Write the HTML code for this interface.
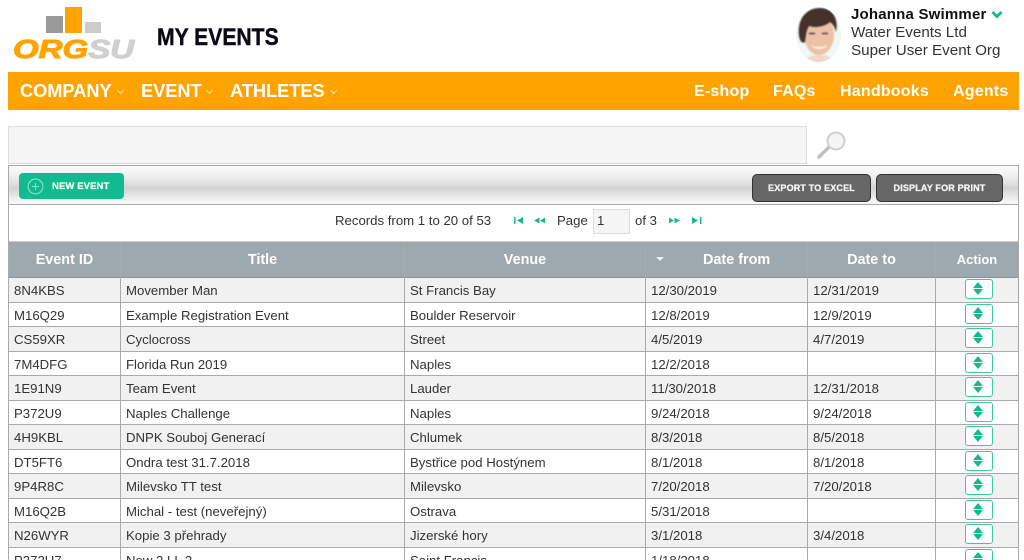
<!DOCTYPE html>
<html><head><meta charset="utf-8"><title>My Events</title>
<style>
html,body{margin:0;padding:0;width:1024px;height:560px;overflow:hidden;background:#fff;font-family:"Liberation Sans",sans-serif;color:#333;font-size:13.2px}
div,span,svg{position:absolute;box-sizing:border-box;white-space:nowrap}
#w{left:0;top:0;width:1024px;height:560px;overflow:hidden;background:#fff}
.nav{font-weight:bold;color:#fff;top:72px;height:38px;line-height:38px}
.big{font-size:18.2px;top:72px}
.small{font-size:16px;letter-spacing:.2px;top:72.5px}
.chev{width:5px;height:5px;border-right:1px solid #ffe3b0;border-bottom:1px solid #ffe3b0;transform:rotate(45deg);top:88px}
.r{left:9px;width:1009px;height:24.5px;border-bottom:1px solid #aaa;background:#fff;line-height:25px}
.o{background:#f1f1f1}
.r span{top:0}
.a{left:5px}.b{left:117px}.c{left:401px}.d{left:642px}.e{left:804px}
.btn{left:956px;top:1px!important;width:28px;height:20px;border:1.5px solid #3cc9a3;border-radius:3px;background:#fff}
.btn:before{content:"";position:absolute;left:7px;top:2px;border-left:5.5px solid transparent;border-right:5.5px solid transparent;border-bottom:6px solid #14b98d}
.btn:after{content:"";position:absolute;left:7px;top:9px;border-left:5.5px solid transparent;border-right:5.5px solid transparent;border-top:6px solid #14b98d}
.th{top:243px;height:36px;line-height:34px;color:#fff;font-weight:bold;text-align:center;font-size:14.4px}
.v{top:242px;width:1px;height:318px;background:#aaa}
.dk{top:174px;height:28px;background:#666;border:1px solid #333;border-radius:5px;color:#f2f2f2;font-weight:bold;font-size:9px;letter-spacing:.17px;line-height:26px;text-align:center;-webkit-text-stroke:.3px #f2f2f2}
.pg{top:212px;line-height:17px}
</style></head><body><div id="w">

<!-- logo -->
<div style="left:46px;top:16px;width:17px;height:17px;background:#999"></div>
<div style="left:65px;top:7px;width:17px;height:26px;background:#ffa300"></div>
<div style="left:85px;top:22px;width:16px;height:11px;background:#ccc"></div>
<div style="left:13px;top:33px;font-size:26px;line-height:32px;font-weight:bold;font-style:italic;transform-origin:0 0;transform:scaleX(1.27);-webkit-text-stroke:1px currentColor"><span style="position:static;color:#ffa300">ORG</span><span style="position:static;color:#d0d0d0">SU</span></div>

<div style="left:157px;top:23px;font-size:24px;line-height:29px;font-weight:bold;color:#0a0a14;transform-origin:0 0;transform:scaleX(.88);-webkit-text-stroke:.4px #0a0a14">MY EVENTS</div>

<!-- avatar -->
<svg style="left:795px;top:6px" width="47" height="57" viewBox="0 0 47 57">
<defs><clipPath id="cp"><ellipse cx="23.5" cy="28.5" rx="22.5" ry="27.5"/></clipPath></defs>
<g clip-path="url(#cp)"><g style="filter:blur(.7px)">
<rect width="47" height="57" fill="#eef8f5"/>
<path d="M8 57 C12 50 18 49 24 49 C31 49 36 50 40 57Z" fill="#f0d8c8"/>
<ellipse cx="24" cy="29" rx="15" ry="20" fill="#eec1a6"/>
<path d="M4 30 C2 12 12 2 25 2 C37 2 44 12 41 26 C40 22 38 18 35 16 C29 21 20 22 14 20 C11 25 11 29 10 36 C7 38 5 35 4 30Z" fill="#46302c"/>
<path d="M16 39 C21 42 28 42 32 39 C30 44 19 44 16 39Z" fill="#fff"/>
<path d="M14 27.5h6M27 27.5h6" stroke="#5a3c34" stroke-width="1.6"/>
</g></g></svg>

<div style="left:851px;top:6px;font-size:15px;font-weight:bold;line-height:18px;color:#111;letter-spacing:.2px">Johanna Swimmer</div>
<svg style="left:991px;top:10px" width="12" height="9" viewBox="0 0 12 9"><path d="M1.5 2 L6 6.5 L10.5 2" fill="none" stroke="#19b98e" stroke-width="3"/></svg>
<div style="left:851px;top:24px;font-size:15.2px;line-height:18px;color:#333">Water Events Ltd</div>
<div style="left:851px;top:42px;font-size:15.2px;line-height:18px;color:#333">Super User Event Org</div>

<!-- nav -->
<div style="left:8px;top:72px;width:1011px;height:38px;background:#ffa300"></div>
<div class="nav big" style="left:20px">COMPANY</div><div class="chev" style="left:118px"></div>
<div class="nav big" style="left:141px">EVENT</div><div class="chev" style="left:207px"></div>
<div class="nav big" style="left:230px">ATHLETES</div><div class="chev" style="left:331px"></div>
<div class="nav small" style="left:694px">E-shop</div>
<div class="nav small" style="left:773px">FAQs</div>
<div class="nav small" style="left:840px">Handbooks</div>
<div class="nav small" style="left:953px">Agents</div>

<!-- search -->
<div style="left:8px;top:126px;width:799px;height:38px;background:#f5f5f5;border:1px solid #ddd"></div>
<svg style="left:816px;top:129px" width="32" height="32" viewBox="0 0 32 32">
<path d="M3 28 L14 17" stroke="#c0c0c0" stroke-width="3.4" stroke-linecap="round"/>
<circle cx="20" cy="12" r="8.5" fill="#f4f4f4" stroke="#cfcfcf" stroke-width="2"/>
</svg>

<!-- toolbar -->
<div style="left:8px;top:165px;width:1011px;height:40px;border:1px solid #aaa;background:linear-gradient(#fbfbfb 0,#f0f0f0 25%,#dcdcdc 50%,#d2d2d2 58%,#eeeeee 85%,#f8f8f8 100%)"></div>
<div style="left:19px;top:173px;width:105px;height:26px;background:#0fbb8f;border-radius:4px"></div>
<svg style="left:27px;top:178px" width="17" height="17" viewBox="0 0 17 17"><circle cx="8.5" cy="8.5" r="7.4" fill="none" stroke="#8fe3cc" stroke-width="1.1"/><path d="M8.5 5v7M5 8.5h7" stroke="#8fe3cc" stroke-width="1"/></svg>
<div style="left:52px;top:175px;line-height:24px;font-size:9.5px;font-weight:bold;letter-spacing:.1px;color:#fff;-webkit-text-stroke:.2px #fff">NEW EVENT</div>
<div class="dk" style="left:752px;width:119px">EXPORT TO EXCEL</div>
<div class="dk" style="left:876px;width:127px">DISPLAY FOR PRINT</div>

<!-- pager -->
<div style="left:8px;top:205px;width:1px;height:355px;background:#aaa"></div>
<div style="left:1018px;top:205px;width:1px;height:355px;background:#aaa"></div>
<div class="pg" style="left:335px">Records from 1 to 20 of 53</div>
<svg style="left:513px;top:216px" width="12" height="9" viewBox="0 0 12 9"><path d="M1 1h1.5v7H1zM10 1v7L4 4.5z" fill="#19b98e"/></svg>
<svg style="left:533px;top:216px" width="13" height="9" viewBox="0 0 13 9"><path d="M6.5 1.5v6L1 4.5zM12 1.5v6L7 4.5z" fill="#19b98e"/></svg>
<div class="pg" style="left:557px">Page</div>
<div style="left:593px;top:209px;width:37px;height:25px;background:#f5f5f5;border:1px solid #ddd;line-height:21px;padding-left:3px">1</div>
<div class="pg" style="left:635px">of 3</div>
<svg style="left:668px;top:216px" width="13" height="9" viewBox="0 0 13 9"><path d="M1 1.5v6L6 4.5zM6.5 1.5v6L12 4.5z" fill="#19b98e"/></svg>
<svg style="left:691px;top:216px" width="12" height="9" viewBox="0 0 12 9"><path d="M1 1v7L7 4.5zM9 1h1.5v7H9z" fill="#19b98e"/></svg>

<!-- header -->
<div style="left:9px;top:241px;width:1009px;height:37px;background:#9da9ae;border-top:1px solid #c8cdcf;border-bottom:1px solid #8a9599"></div>
<div class="th" style="left:9px;width:111px">Event ID</div>
<div class="th" style="left:121px;width:283px">Title</div>
<div class="th" style="left:405px;width:240px">Venue</div>
<div class="th" style="left:703px">Date from</div>
<div class="th" style="left:808px;width:127px">Date to</div>
<div class="th" style="left:936px;width:82px;font-size:13px;top:243px">Action</div>
<div style="left:656px;top:257px;border-left:4px solid transparent;border-right:4px solid transparent;border-top:4px solid #f0f2f3"></div>

<!-- rows -->
<div class="r o" style="top:278px"><span class="a">8N4KBS</span><span class="b">Movember Man</span><span class="c">St Francis Bay</span><span class="d">12/30/2019</span><span class="e">12/31/2019</span><span class="btn"></span></div>
<div class="r" style="top:302.5px"><span class="a">M16Q29</span><span class="b">Example Registration Event</span><span class="c">Boulder Reservoir</span><span class="d">12/8/2019</span><span class="e">12/9/2019</span><span class="btn"></span></div>
<div class="r o" style="top:327px"><span class="a">CS59XR</span><span class="b">Cyclocross</span><span class="c">Street</span><span class="d">4/5/2019</span><span class="e">4/7/2019</span><span class="btn"></span></div>
<div class="r" style="top:351.5px"><span class="a">7M4DFG</span><span class="b">Florida Run 2019</span><span class="c">Naples</span><span class="d">12/2/2018</span><span class="btn"></span></div>
<div class="r o" style="top:376px"><span class="a">1E91N9</span><span class="b">Team Event</span><span class="c">Lauder</span><span class="d">11/30/2018</span><span class="e">12/31/2018</span><span class="btn"></span></div>
<div class="r" style="top:400.5px"><span class="a">P372U9</span><span class="b">Naples Challenge</span><span class="c">Naples</span><span class="d">9/24/2018</span><span class="e">9/24/2018</span><span class="btn"></span></div>
<div class="r o" style="top:425px"><span class="a">4H9KBL</span><span class="b">DNPK Souboj Generací</span><span class="c">Chlumek</span><span class="d">8/3/2018</span><span class="e">8/5/2018</span><span class="btn"></span></div>
<div class="r" style="top:449.5px"><span class="a">DT5FT6</span><span class="b">Ondra test 31.7.2018</span><span class="c">Bystřice pod Hostýnem</span><span class="d">8/1/2018</span><span class="e">8/1/2018</span><span class="btn"></span></div>
<div class="r o" style="top:474px"><span class="a">9P4R8C</span><span class="b">Milevsko TT test</span><span class="c">Milevsko</span><span class="d">7/20/2018</span><span class="e">7/20/2018</span><span class="btn"></span></div>
<div class="r" style="top:498.5px"><span class="a">M16Q2B</span><span class="b">Michal - test (neveřejný)</span><span class="c">Ostrava</span><span class="d">5/31/2018</span><span class="btn"></span></div>
<div class="r o" style="top:523px"><span class="a">N26WYR</span><span class="b">Kopie 3 přehrady</span><span class="c">Jizerské hory</span><span class="d">3/1/2018</span><span class="e">3/4/2018</span><span class="btn"></span></div>
<div class="r" style="top:547.5px"><span class="a">P372U7</span><span class="b">New 2 LL 2</span><span class="c">Saint Francis</span><span class="d">1/18/2018</span><span class="btn"></span></div>

<div class="v" style="left:120px"></div>
<div class="v" style="left:404px"></div>
<div class="v" style="left:645px"></div>
<div class="v" style="left:807px"></div>
<div class="v" style="left:935px"></div>

</div></body></html>
